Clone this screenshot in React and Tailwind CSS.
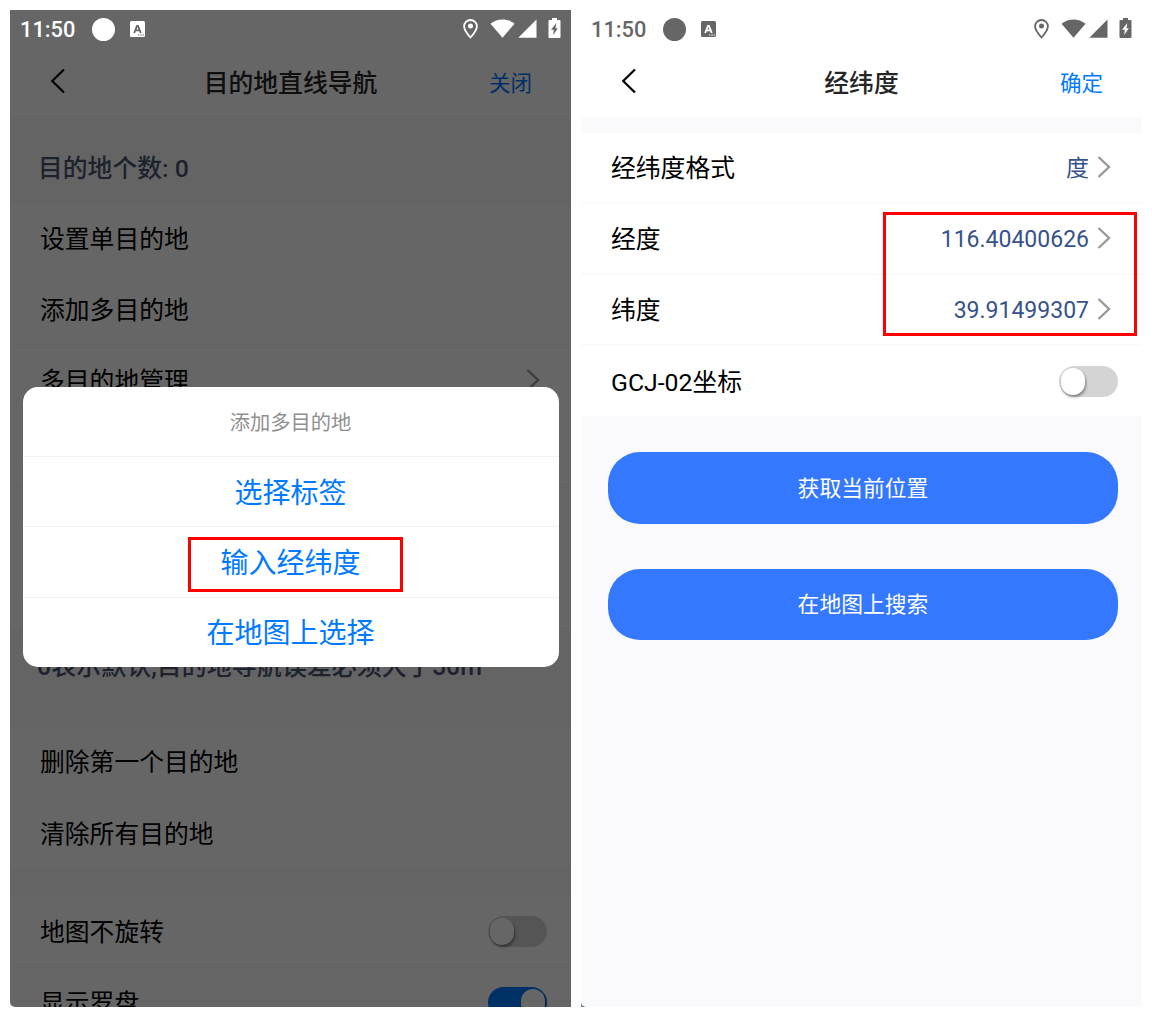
import React from 'react';

const StatusBar = ({ light }) => (
    <div className={`flex h-[38px] items-center pl-[10px] pr-[10px] ${light ? 'text-white' : 'text-[#666666]'}`}>
        <span className="w-[55px] pt-[2px] text-[21.8px] font-medium leading-none whitespace-nowrap">11:50</span>
        <span className="ml-[17px] h-[23px] w-[23px] rounded-full bg-current"></span>
        {/* keyboard indicator */}
        <svg className="ml-[15px]" width="15" height="16" viewBox="0 0 15 16">
            <rect width="15" height="16" rx="1.5" fill="currentColor" />
            <path
                d="M4.2 12 L7 4.8 H8 L10.8 12 M5.4 9.4 H9.6"
                fill="none"
                stroke={light ? '#666666' : '#ffffff'}
                strokeWidth="1.8"
            />
            <path d="M8 14h1.4M10.4 14h1.4M12.6 14h1.4" stroke={light ? '#666666' : '#ffffff'} strokeWidth="1.2" />
        </svg>
        <div className="ml-auto flex items-center">
            <svg width="15" height="20" viewBox="0 0 15 20" fill="none">
                <path
                    d="M7.5 1C3.9 1 1.1 3.8 1.1 7.3C1.1 11.5 7.5 18.5 7.5 18.5S13.9 11.5 13.9 7.3C13.9 3.8 11.1 1 7.5 1Z"
                    stroke="currentColor"
                    strokeWidth="1.8"
                />
                <circle cx="7.5" cy="7" r="2.5" fill="currentColor" />
            </svg>
            <svg className="-mt-[1px] ml-[12px]" width="25" height="19" viewBox="0 0 25 19">
                <path d="M0.5 4.7C7.3 -1 17.7 -1 24.5 4.7L12.5 18.8Z" fill="currentColor" />
            </svg>
            <svg className="-mt-[1px] ml-[3px]" width="19" height="19" viewBox="0 0 19 19">
                <path d="M18.5 0.5V18.7H0.3Z" fill="currentColor" />
            </svg>
            <svg className="-mt-[2px] ml-[11px]" width="13" height="20" viewBox="0 0 13 20">
                <path
                    fillRule="evenodd"
                    d="M4 0H9V2H11.5Q12.5 2 12.5 3V19Q12.5 20 11.5 20H1.5Q0.5 20 0.5 19V3Q0.5 2 1.5 2H4ZM8.4 5L3 11.8H5.8L5.2 17L9.8 10.2H7.4Z"
                    fill="currentColor"
                />
            </svg>
        </div>
    </div>
);

const Header = ({ title, action }) => (
    <div className="flex h-[69px] items-start px-[39px] pt-[21px]">
        <svg className="h-[24px] w-[60px]" viewBox="0 0 60 24" fill="none">
            <path d="M15 0.5L3.2 12L15 23.5" stroke="#000000" strokeWidth="2.2" />
        </svg>
        <div className="flex-1 text-center text-[24.8px] font-medium leading-[30px] text-[#262626]">{title}</div>
        <div className="w-[60px] text-right text-[21.5px] leading-[30px] text-[#007aff]">{action}</div>
    </div>
);

const Chevron = () => (
    <svg className="-mt-[2px] ml-[8px] mr-[1px]" width="14" height="22" viewBox="0 0 14 22" fill="none">
        <path d="M1.5 1L12 11L1.5 21" stroke="#999999" strokeWidth="2.4" />
    </svg>
);

const Switch = ({ on }) => (
    <div
        className={`flex h-[31px] w-[59px] items-center rounded-full px-[2px] ${
            on ? 'justify-end bg-[#007aff]' : 'bg-[#d4d4d4]'
        }`}
    >
        <div className="h-[27px] w-[24px] rounded-full bg-white shadow-[1px_2px_3px_rgba(0,0,0,0.4)]"></div>
    </div>
);

const Row = ({ label, value, arrow, children, last }) => (
    <div
        className={`flex shrink-0 items-center bg-white pl-[30px] text-[24.8px] text-black ${
            last ? 'h-[70px]' : 'h-[71px] border-b-2 border-[#fafafa]'
        } ${arrow ? 'pr-[30px]' : 'pr-[24px]'}`}
    >
        <span className="pt-[3px]">{label}</span>
        <div className="ml-auto flex items-center">
            {value && <span className="pt-[4px] text-[23px] text-[#37528b]">{value}</span>}
            {arrow && <Chevron />}
            {children}
        </div>
    </div>
);

const SheetItem = ({ label }) => (
    <div className="flex h-[70.3px] items-center justify-center border-t border-[#f2f2f2] pt-[4px] text-[28px] text-[#007aff]">
        {label}
    </div>
);

const NavigationScreen = () => (
    <div className="relative flex h-[997px] w-[561px] flex-col overflow-hidden rounded-bl-[5px] bg-[#fafafc]">
        <div className="shrink-0 bg-white">
            <div className="h-[38px]"></div>
            <Header title="目的地直线导航" action="关闭" />
        </div>
        <div className="flex h-[87px] shrink-0 items-center pl-[28px] pt-[17px] text-[24.8px] font-medium text-[#4c5570]">
            目的地个数: 0
        </div>
        <Row label="设置单目的地" />
        <Row label="添加多目的地" />
        <Row label="多目的地管理" arrow />
        <Row />
        <Row />
        <Row last />
        <div className="h-[98px] shrink-0 pl-[27px] pt-[19px] text-[25px] font-medium leading-[37px] text-[#4c5570]">
            0表示默认,目的地导航误差必须大于50m
        </div>
        <Row label="删除第一个目的地" />
        <Row label="清除所有目的地" last />
        <div className="h-[29px] shrink-0"></div>
        <Row label="地图不旋转">
            <Switch />
        </Row>
        <Row label="显示罗盘">
            <Switch on />
        </Row>

        {/* mask + action sheet */}
        <div className="absolute inset-0 bg-black/60">
            <StatusBar light />
        </div>
        <div className="absolute left-[12.5px] top-[377px] h-[280px] w-[536px] overflow-hidden rounded-[15px] bg-white">
            <div className="flex h-[69px] items-center justify-center pt-[4px] text-[20.3px] text-[#8f8f8f]">
                添加多目的地
            </div>
            <SheetItem label="选择标签" />
            <SheetItem label="输入经纬度" />
            <SheetItem label="在地图上选择" />
        </div>
        <div className="absolute left-[178px] top-[527px] h-[55px] w-[215px] border-3 border-[#ff0000]"></div>
    </div>
);

const CoordinateScreen = () => (
    <div className="relative h-[997px] w-[561px] bg-[#607d8b]">
        <div className="flex h-full flex-col rounded-bl-[5px] bg-[#fafafc]">
            <div className="bg-white">
                <StatusBar />
                <Header title="经纬度" action="确定" />
            </div>
            <div className="mt-[16px]">
                <Row label="经纬度格式" value="度" arrow />
                <Row label="经度" value="116.40400626" arrow />
                <Row label="纬度" value="39.91499307" arrow />
                <Row label="GCJ-02坐标" last>
                    <Switch />
                </Row>
            </div>
            <div className="mt-[36px] flex flex-col gap-[45px] pl-[27px] pr-[24px]">
                <button className="h-[72px] rounded-[32px] bg-[#3478ff] pt-[2px] text-[21.8px] text-white">
                    获取当前位置
                </button>
                <button className="h-[71px] rounded-[32px] bg-[#3478ff] pt-[2px] text-[21.8px] text-white">
                    在地图上搜索
                </button>
            </div>
        </div>
        <div className="absolute left-[302px] top-[202px] h-[124px] w-[254px] border-3 border-[#ff0000]"></div>
    </div>
);

const App = () => {
    return (
        <div className="flex h-[1017px] w-[1152px] gap-[10px] bg-white p-[10px] font-[Roboto,'Noto_Sans_CJK_SC',sans-serif]">
            <NavigationScreen />
            <CoordinateScreen />
        </div>
    );
};

export default App;
